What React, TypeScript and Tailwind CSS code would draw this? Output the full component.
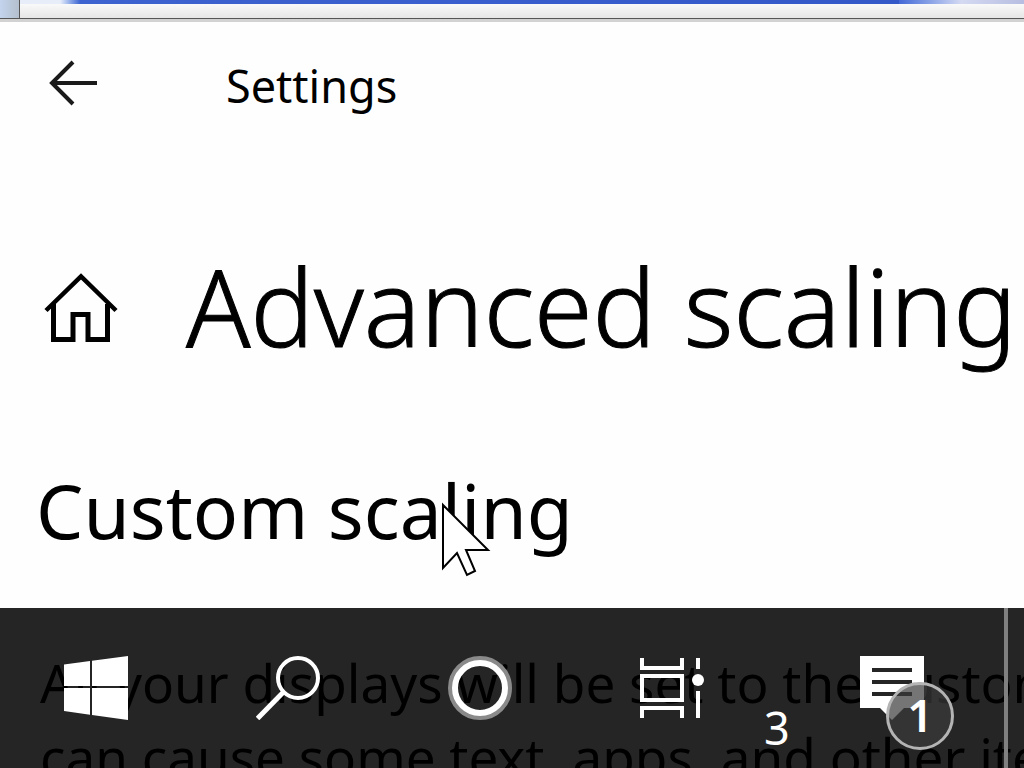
import React from 'react';

const BackIcon = () => (
  <svg viewBox="0 0 50 46" className="h-[46px] w-[50px]" fill="none" stroke="#1a1a1a" strokeWidth="4">
    <path d="M49 23H4M25 2L4 23l21 21" />
  </svg>
);

const HomeIcon = () => (
  <svg viewBox="0 0 74 70" className="h-[70px] w-[74px]" fill="none" stroke="black" strokeWidth="5">
    <path d="M2 37.500L37 3.500l35 34" strokeWidth="4.500" />
    <path d="M9.500 31v35.500H29V41.500h15v25h19.500V31" />
  </svg>
);

const WindowsIcon = () => (
  <svg viewBox="0 0 64 64" className="h-16 w-16" fill="white">
    <path d="M0 8.500L26 5v25H0zM28 4.700L64 0v30H28zM0 32h26v26.700L0 55zM28 32h36v32l-36-5z" />
  </svg>
);

const SearchIcon = () => (
  <svg viewBox="0 0 64 64" className="h-16 w-16" fill="none" stroke="white" strokeWidth="4">
    <circle cx="42" cy="22" r="20" />
    <path d="M27.500 36L1.500 62.500" strokeWidth="5" />
  </svg>
);

const CortanaIcon = () => (
  <svg viewBox="0 0 64 64" className="h-16 w-16" fill="none">
    <circle cx="32" cy="32" r="29" stroke="#8a8a8a" strokeWidth="6" />
    <circle cx="32" cy="32" r="25" stroke="white" strokeWidth="6" />
  </svg>
);

const TaskViewIcon = () => (
  <svg viewBox="0 0 64 64" className="h-16 w-16" fill="none" stroke="white" strokeWidth="4">
    <path d="M2 2v10h40V2M2 20h40v24H2zM2 62V52h40v10M58 2v11M58 35v27" />
    <circle cx="58" cy="24" r="6" fill="white" stroke="none" />
  </svg>
);

const MessageIcon = () => (
  <svg viewBox="0 0 64 64" className="h-16 w-16">
    <path d="M0 0h64v52H44L32 64 20 52H0z" fill="white" />
    <path d="M12 14h40M12 26h40M12 38h40" stroke="#252525" strokeWidth="4" />
  </svg>
);

const Pointer = () => (
  <svg
    viewBox="0 0 50 78"
    className="absolute top-[500px] left-[441px] h-[78px] w-[50px]"
    fill="white"
    stroke="black"
    strokeWidth="2"
  >
    <path d="M2 5v63l14-15 10 22 8-4-9-21h22z" />
  </svg>
);

const apps = [
  { label: 'Start', Icon: WindowsIcon },
  { label: 'Search', Icon: SearchIcon },
  { label: 'Cortana', Icon: CortanaIcon },
  { label: 'Task View', Icon: TaskViewIcon },
];

const Taskbar: React.FC = () => (
  <nav className="absolute inset-x-0 bottom-0 flex h-40 items-stretch bg-black/[.855] text-white">
    {apps.map(({ label, Icon }) => (
      <button key={label} type="button" aria-label={label} className="flex w-48 shrink items-center justify-center">
        <Icon />
      </button>
    ))}
    <div className="flex flex-1 items-stretch justify-between">
      <span className="-ml-1 self-end pb-2 text-[45px] leading-[64px]">3</span>
      <button type="button" aria-label="Notifications" className="relative mr-20 w-16">
        <MessageIcon />
        <span className="absolute top-[74px] left-[26px] flex h-[68px] w-[68px] items-center justify-center rounded-full border-3 border-[#b4b4b4] bg-[#3a3a3a]/70 pb-1 text-[45px] leading-none font-semibold">
          1
        </span>
      </button>
    </div>
    <button type="button" aria-label="Show desktop" className="w-5 border-l-4 border-[#808080]" />
  </nav>
);

const App: React.FC = () => {
  return (
    <div className="relative h-screen overflow-hidden bg-[#fefefe] font-['Noto_Sans','Open_Sans',sans-serif] text-black">
      <div className="flex h-[22px] border-b-3 border-[#d2d2d2]">
        <div className="w-5 border-r border-b border-[#555] bg-linear-to-r from-[#c3d4ed] to-[#b4bfcd]" />
        <div className="flex-1 border-b border-[#555] bg-linear-to-b from-white to-[#e6e6e6]">
          <div className="h-1 bg-linear-to-r from-[#e8eef9] from-4% via-[#3d63d0] via-6% to-[#3558c9] to-85%">
            <div className="ml-auto h-1 w-1/8 bg-linear-to-r from-[#4468d6] via-[#d5daf2] to-[#b6bde0]" />
          </div>
        </div>
      </div>

      <header className="flex h-[122px] items-center">
        <button type="button" aria-label="Back" className="ml-12">
          <BackIcon />
        </button>
        <span className="ml-32 pt-1.5 text-[45px] leading-[64px]">Settings</span>
      </header>

      <main className="whitespace-nowrap">
        <div className="flex items-center pt-[88px]">
          <a href="#home" aria-label="Home" className="ml-11 pt-1">
            <HomeIcon />
          </a>
          <h1 className="ml-[68px] text-[106px] leading-[148px] font-light [-webkit-text-stroke:1px_black]">
            Advanced scaling
          </h1>
        </div>
        <h2 className="pt-[74px] pl-9 text-[75px] leading-[112px]">Custom scaling</h2>
        <p className="pt-20 pl-10 text-[53px] leading-[74px]">
          All your displays will be set to the custom
          <br />
          can cause some text, apps, and other items
        </p>
      </main>

      <Pointer />
      <Taskbar />
    </div>
  );
};

export default App;
